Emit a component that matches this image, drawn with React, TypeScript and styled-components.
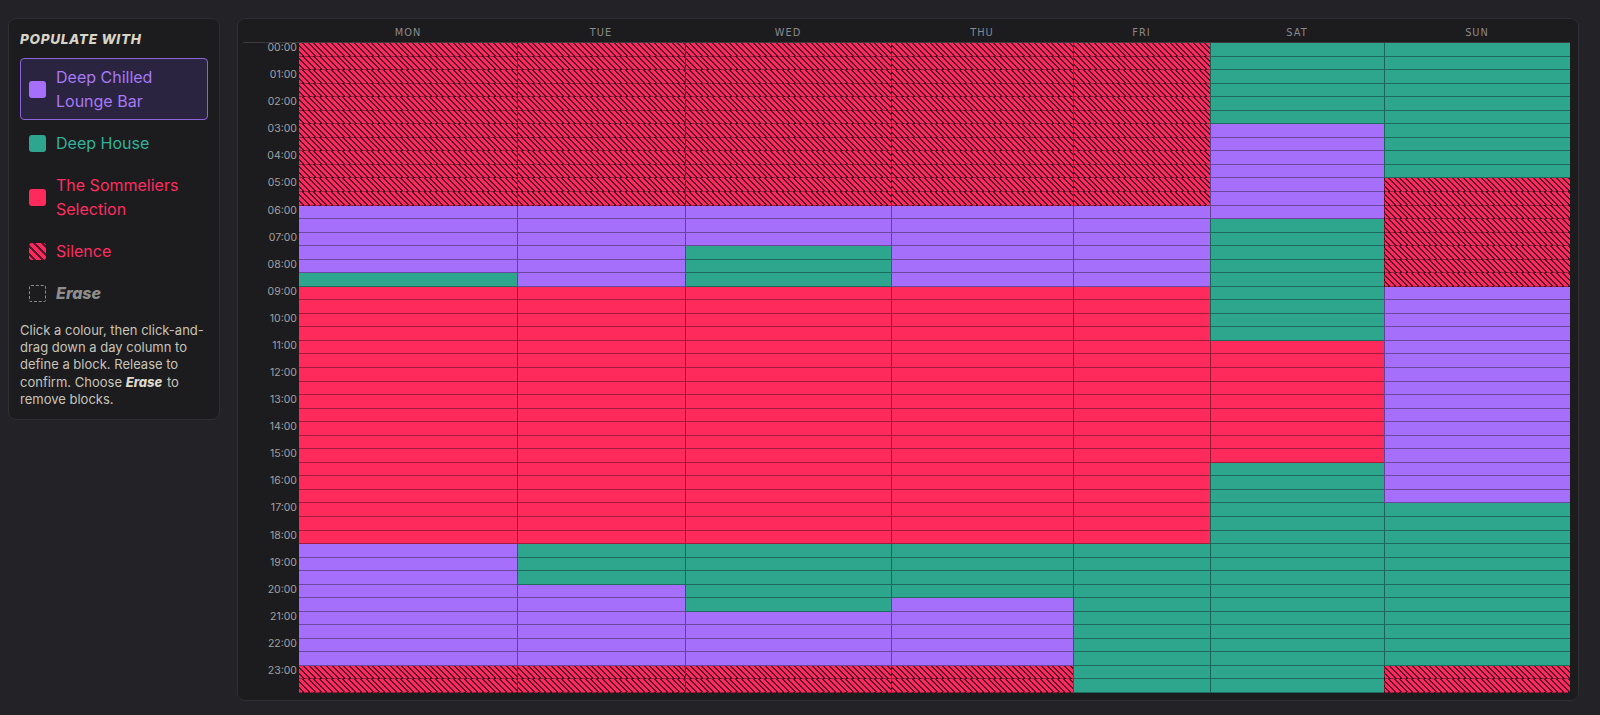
import React, { useState } from 'react';
import styled, { createGlobalStyle, css } from 'styled-components';

type Kind = 'lounge' | 'house' | 'somm' | 'silence' | 'erase';

const COLORS: Record<string, string> = {
  lounge: '#a66ffb',
  house: '#2ea68e',
  somm: '#fe2a5c',
};

const HATCH = 'repeating-linear-gradient(45deg, #fe2a5c 0 2.6px, #5a1430 2.6px 4.1px)';

const GlobalStyle = createGlobalStyle`
  html, body {
    margin: 0;
    padding: 0;
    background: #232327;
    font-family: Inter, "Noto Sans", sans-serif;
  }
`;

const Page = styled.div`
  display: flex;
  align-items: flex-start;
  gap: 17px;
  padding: 18px 0 0 8px;
`;

const Sidebar = styled.aside`
  width: 212px;
  box-sizing: border-box;
  background: #1c1c1f;
  border: 1px solid #2e2e33;
  border-radius: 8px;
  padding: 11px;
`;

const Heading = styled.h3`
  margin: 0 0 10px;
  font-size: 13.5px;
  line-height: 18px;
  font-weight: 800;
  font-style: italic;
  letter-spacing: 0.7px;
  color: #d8d4c6;
`;

const Options = styled.div`
  display: flex;
  flex-direction: column;
  gap: 4px;
`;

const Option = styled.button<{ $active: boolean; $color: string }>`
  display: flex;
  align-items: center;
  gap: 10px;
  width: 100%;
  padding: 6px 8px;
  text-align: left;
  background: transparent;
  border: 1px solid transparent;
  border-radius: 4px;
  font-family: Inter, "Noto Sans", sans-serif;
  font-size: 16px;
  line-height: 24px;
  color: ${(p) => p.$color};
  cursor: pointer;
  ${(p) =>
    p.$active &&
    css`
      background: #2a2440;
      border-color: #8a65d8;
    `}
`;

const Swatch = styled.span<{ $kind: Kind }>`
  flex: 0 0 17px;
  width: 17px;
  height: 17px;
  box-sizing: border-box;
  border-radius: 3px;
  ${(p) =>
    p.$kind === 'silence'
      ? css`
          background: repeating-linear-gradient(45deg, #fe2a5c 0 3.2px, #5a1430 3.2px 5.6px);
        `
      : p.$kind === 'erase'
      ? css`
          border: 1px dashed #8a8a8a;
          border-radius: 2px;
        `
      : css`
          background: ${COLORS[p.$kind]};
        `}
`;

const EraseLabel = styled.span`
  font-weight: 800;
  font-style: italic;
`;

const Help = styled.p`
  margin: 10px 0 0;
  font-size: 13px;
  line-height: 17.2px;
  color: #c8c4b9;
  b {
    display: inline-block;
    font-weight: 800;
    font-style: italic;
    color: #ddd9cc;
    padding-right: 1px;
  }
`;

const Panel = styled.section`
  width: 1342px;
  height: 683px;
  box-sizing: border-box;
  background: #1c1c1f;
  border: 1px solid #2e2e33;
  border-radius: 8px;
  padding: 5px 8px 8px 5px;
`;

const COLS = '56px 218px 168px 206px 182px 137px 174px 186px';

const HeaderRow = styled.div`
  display: grid;
  grid-template-columns: ${COLS};
  height: 18px;
  border-bottom: 1px solid #3a3a3f;
`;

const DayLabel = styled.div`
  text-align: center;
  font-family: "DejaVu Sans", sans-serif;
  font-size: 9.8px;
  line-height: 17px;
  letter-spacing: 1px;
  color: #8a8a8c;
`;

const Body = styled.div`
  display: grid;
  grid-template-columns: ${COLS};
  height: 650px;
`;

const TimeColumn = styled.div`
  display: grid;
  grid-template-rows: repeat(24, 1fr);
`;

const TimeLabel = styled.div`
  text-align: right;
  padding-right: 2px;
  font-size: 10.5px;
  line-height: 10px;
  color: #a0a0a2;
`;

const DayColumn = styled.div`
  display: grid;
  grid-template-rows: repeat(48, 1fr);
`;

const Cell = styled.div<{ $kind: Kind; $divider: boolean }>`
  box-sizing: border-box;
  border-bottom: 1px solid rgba(0, 0, 0, 0.35);
  ${(p) => p.$divider && 'border-left: 1.5px solid rgba(0, 0, 0, 0.4);'}
  background: ${(p) => (p.$kind === 'silence' ? HATCH : COLORS[p.$kind])};
`;

const OPTIONS: { kind: Kind; label: string; color: string }[] = [
  { kind: 'lounge', label: 'Deep Chilled Lounge Bar', color: '#a779f6' },
  { kind: 'house', label: 'Deep House', color: '#33b198' },
  { kind: 'somm', label: 'The Sommeliers Selection', color: '#ff2d60' },
  { kind: 'silence', label: 'Silence', color: '#ff2d60' },
  { kind: 'erase', label: 'Erase', color: '#8e8e8e' },
];

const DAYS = ['MON', 'TUE', 'WED', 'THU', 'FRI', 'SAT', 'SUN'];

const S: Kind = 'silence';
const P: Kind = 'lounge';
const G: Kind = 'house';
const R: Kind = 'somm';

const SCHEDULE: [Kind, number][][] = [
  [[S, 12], [P, 5], [G, 1], [R, 19], [P, 9], [S, 2]],
  [[S, 12], [P, 6], [R, 19], [G, 3], [P, 6], [S, 2]],
  [[S, 12], [P, 3], [G, 3], [R, 19], [G, 5], [P, 4], [S, 2]],
  [[S, 12], [P, 6], [R, 19], [G, 4], [P, 5], [S, 2]],
  [[S, 12], [P, 6], [R, 19], [G, 11]],
  [[G, 6], [P, 7], [G, 9], [R, 9], [G, 17]],
  [[G, 10], [S, 8], [P, 16], [G, 12], [S, 2]],
];

const expand = (segments: [Kind, number][]) =>
  segments.flatMap(([kind, n]) => Array.from({ length: n }, () => kind));

const hours = Array.from({ length: 24 }, (_, i) => `${String(i).padStart(2, '0')}:00`);

const App: React.FC = () => {
  const [selected, setSelected] = useState<Kind>('lounge');

  return (
    <>
      <GlobalStyle />
      <Page>
        <Sidebar>
          <Heading>POPULATE WITH</Heading>
          <Options>
            {OPTIONS.map((o) => (
              <Option
                key={o.kind}
                $active={selected === o.kind}
                $color={o.color}
                onClick={() => setSelected(o.kind)}
              >
                <Swatch $kind={o.kind} />
                {o.kind === 'erase' ? <EraseLabel>{o.label}</EraseLabel> : <span>{o.label}</span>}
              </Option>
            ))}
          </Options>
          <Help>
            Click a colour, then click-and-drag down a day column to define a block. Release to
            confirm. Choose <b>Erase</b> to remove blocks.
          </Help>
        </Sidebar>

        <Panel>
          <HeaderRow>
            <div />
            {DAYS.map((d) => (
              <DayLabel key={d}>{d}</DayLabel>
            ))}
          </HeaderRow>
          <Body>
            <TimeColumn>
              {hours.map((h) => (
                <TimeLabel key={h}>{h}</TimeLabel>
              ))}
            </TimeColumn>
            {SCHEDULE.map((segments, di) => (
              <DayColumn key={DAYS[di]}>
                {expand(segments).map((kind, ri) => (
                  <Cell key={ri} $kind={kind} $divider={di > 0} />
                ))}
              </DayColumn>
            ))}
          </Body>
        </Panel>
      </Page>
    </>
  );
};

export default App;
